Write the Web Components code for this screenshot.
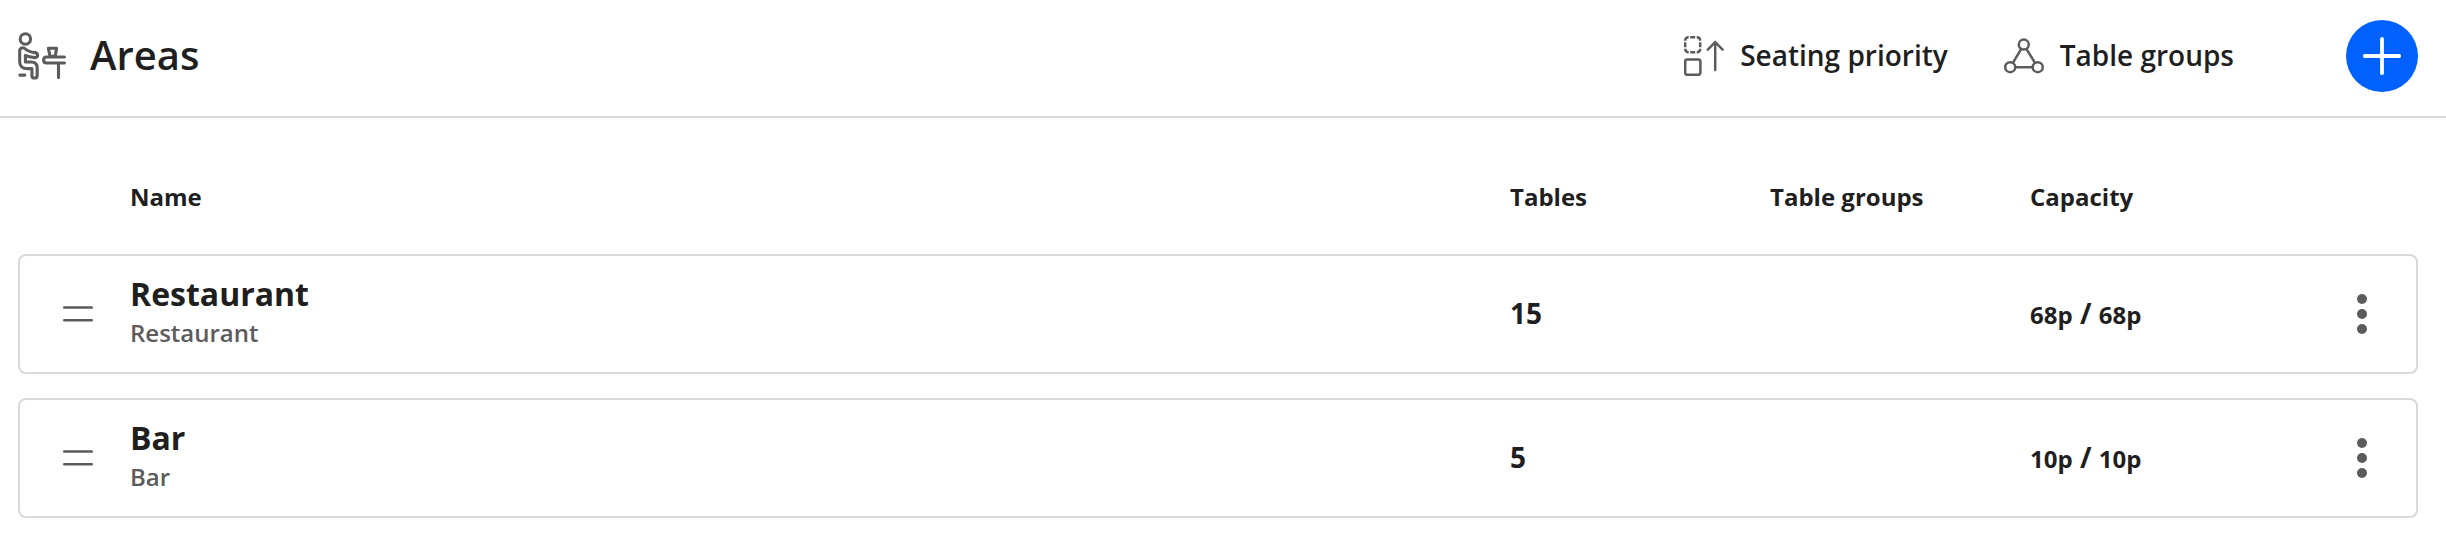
<!DOCTYPE html>
<html lang="en">
<head>
<meta charset="utf-8">
<title>Areas</title>
<style>
  body {
    margin: 0;
    background: #fff;
    color: #1f1f1f;
    font-family: "Open Sans", sans-serif;
    --muted: #5c5c5c;
    --line: #d9d9d9;
    --columns: 110px 1fr 260px 260px 278px 108px;
  }
</style>
</head>
<body>
<page-header heading="Areas">
  <header-action icon="priority">Seating priority</header-action>
  <header-action icon="groups">Table groups</header-action>
</page-header>
<area-list>
  <area-row name="Restaurant" label="Restaurant" tables="15" seats="68p" total="68p"></area-row>
  <area-row name="Bar" label="Bar" tables="5" seats="10p" total="10p"></area-row>
</area-list>

<script>
const icons = {
  seat: `
    <svg width="48" height="48" viewBox="0 0 48 48" stroke-width="3.1">
      <circle cx="7.4" cy="7" r="5.2"/>
      <path d="M1.7 19.2C1.7 15.6 5.2 14.8 7.4 17C9.8 19.4 13.5 20.2 17 20.6C20.6 21.2 20.4 25.8 17 25.6C13.4 25.4 10 24.8 7.4 23.4V30H13C17 30 19.2 32.2 19.2 36V43.4C19.2 46.9 13.9 46.9 13.9 43.4V36.6H9C4.5 36.6 1.7 34 1.7 30Z"/>
      <path d="M1.8 43.1H6.8M46.4 25H28.4C24.7 25 24.7 31 28.4 31H46.4M40.5 31.5V45.5"/>
      <path d="M30.4 16.2H38.6L37.2 24.2M30.4 16.2L32 24.2H37.2"/>
    </svg>`,
  priority: `
    <svg width="40" height="40" viewBox="0 0 40 40" stroke-width="2.5">
      <path stroke-linecap="butt" d="M1.2 4.7Q1.2 1.2 4.7 1.2M12.7 1.2Q16.2 1.2 16.2 4.7M16.2 12.7Q16.2 16.2 12.7 16.2M4.7 16.2Q1.2 16.2 1.2 12.7M6.2 1.2H11.2M6.2 16.2H11.2M1.2 6.2V11.2M16.2 6.2V11.2"/>
      <rect x="1.2" y="23.6" width="15.2" height="15.2" rx="2"/>
      <path d="M31.2 34V6M23.8 13.6L31.2 6.2L38.6 13.6"/>
    </svg>`,
  groups: `
    <svg width="40" height="40" viewBox="0 0 40 40" stroke-width="2.5">
      <circle cx="19.8" cy="8.6" r="5"/>
      <circle cx="6.2" cy="31.2" r="5"/>
      <circle cx="33.7" cy="31.2" r="5"/>
      <path d="M17.1 13.1L8.9 26.8M22.5 13.1L31 26.8M11.4 31.2H28.5"/>
    </svg>`,
  plus: `
    <svg width="40" height="40" viewBox="0 0 40 40" stroke-width="3.8">
      <path d="M20 2.8V37.2M2.8 20H37.2"/>
    </svg>`,
  handle: `
    <svg width="30" height="18" viewBox="0 0 30 18" stroke-width="2.5">
      <path d="M1.2 2.5H28.8M1.2 15.3H28.8"/>
    </svg>`,
  more: `
    <svg width="10" height="40" viewBox="0 0 10 40">
      <g fill="currentColor" stroke="none">
        <circle cx="5" cy="5" r="5"/>
        <circle cx="5" cy="20" r="5"/>
        <circle cx="5" cy="35" r="5"/>
      </g>
    </svg>`
};

const svgStyle = `
  svg {
    display: block;
    flex: none;
    fill: none;
    stroke: currentColor;
    stroke-linecap: round;
    stroke-linejoin: round;
    color: var(--muted);
  }
`;

class PageHeader extends HTMLElement {
  constructor() {
    super();
    this.attachShadow({ mode: "open" });
  }

  connectedCallback() {
    this.shadowRoot.innerHTML = `
      <style>
        ${svgStyle}
        :host {
          display: flex;
          align-items: center;
          box-sizing: border-box;
          height: 118px;
          padding: 0 28px 4px 18px;
          border-bottom: 2px solid var(--line);
        }

        h1 {
          flex: 1;
          margin: 0 0 2px 24px;
          font-size: 40px;
          font-weight: 600;
          line-height: 54px;
        }

        nav {
          display: flex;
          gap: 56px;
        }

        button {
          display: flex;
          align-items: center;
          justify-content: center;
          width: 72px;
          height: 72px;
          margin: 0 0 0 112px;
          padding: 0;
          border: 0;
          border-radius: 50%;
          background: #0061ff;
        }

        button svg {
          color: #fff;
        }
      </style>
      ${icons.seat}
      <h1>${this.getAttribute("heading")}</h1>
      <nav><slot></slot></nav>
      <button aria-label="Add area">${icons.plus}</button>
    `;
  }
}

class HeaderAction extends HTMLElement {
  constructor() {
    super();
    this.attachShadow({ mode: "open" });
  }

  connectedCallback() {
    this.shadowRoot.innerHTML = `
      <style>
        ${svgStyle}
        :host {
          display: flex;
          align-items: center;
          gap: 16px;
          font-size: 28px;
          font-weight: 600;
          line-height: 40px;
          white-space: nowrap;
        }

        span {
          padding-bottom: 2px;
        }
      </style>
      ${icons[this.getAttribute("icon")]}
      <span><slot></slot></span>
    `;
  }
}

class AreaList extends HTMLElement {
  constructor() {
    super();
    this.attachShadow({ mode: "open" });
  }

  connectedCallback() {
    this.shadowRoot.innerHTML = `
      <style>
        :host {
          display: block;
          padding: 62px 28px 0 18px;
        }

        .head {
          display: grid;
          grid-template-columns: var(--columns);
          padding: 0 2px;
          margin-bottom: 40px;
          font-size: 24px;
          font-weight: 700;
          line-height: 34px;
        }

        .rows {
          display: flex;
          flex-direction: column;
          gap: 24px;
        }
      </style>
      <div class="head">
        <span></span>
        <span>Name</span>
        <span>Tables</span>
        <span>Table groups</span>
        <span>Capacity</span>
      </div>
      <div class="rows"><slot></slot></div>
    `;
  }
}

class AreaRow extends HTMLElement {
  constructor() {
    super();
    this.attachShadow({ mode: "open" });
  }

  connectedCallback() {
    this.shadowRoot.innerHTML = `
      <style>
        ${svgStyle}
        :host {
          display: grid;
          grid-template-columns: var(--columns);
          align-items: center;
          box-sizing: border-box;
          height: 120px;
          border: 2px solid var(--line);
          border-radius: 8px;
        }

        .handle,
        .more {
          display: flex;
          justify-content: center;
        }

        .handle {
          padding-left: 6px;
        }

        .name {
          font-size: 32px;
          font-weight: 700;
          line-height: 38px;
        }

        .label {
          font-size: 24px;
          font-weight: 600;
          line-height: 40px;
          color: var(--muted);
        }

        .tables,
        .capacity {
          padding-bottom: 2px;
          font-size: 28px;
          font-weight: 700;
          line-height: 38px;
        }

        small {
          font-size: 24px;
          line-height: 1;
        }
      </style>
      <div class="handle">${icons.handle}</div>
      <div>
        <div class="name">${this.getAttribute("name")}</div>
        <div class="label">${this.getAttribute("label")}</div>
      </div>
      <div class="tables">${this.getAttribute("tables")}</div>
      <div></div>
      <div class="capacity"><small>${this.getAttribute("seats")}</small> / <small>${this.getAttribute("total")}</small></div>
      <div class="more">${icons.more}</div>
    `;
  }
}

customElements.define("page-header", PageHeader);
customElements.define("header-action", HeaderAction);
customElements.define("area-list", AreaList);
customElements.define("area-row", AreaRow);
</script>
</body>
</html>
